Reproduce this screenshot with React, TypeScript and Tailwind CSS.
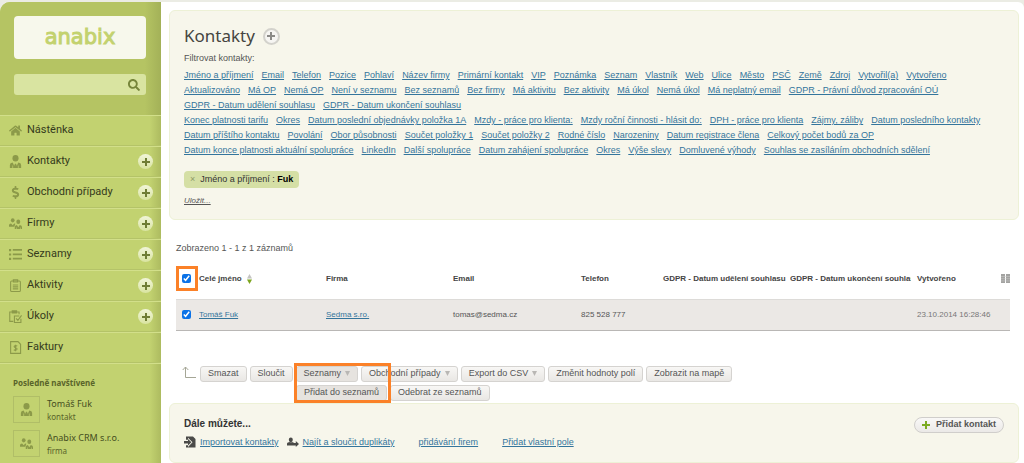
import React, { useState } from "react";
import { FaHome, FaDollarSign, FaSearch } from "react-icons/fa";

type IconProps = { className?: string };

const PersonIcon: React.FC<IconProps> = ({ className }) => (
  <svg viewBox="0 0 12 12" className={className} fill="currentColor">
    <ellipse cx="6" cy="3" rx="2.8" ry="3" />
    <path d="M.8 12V9.2Q.8 7.4 3.4 7l1.4 3 .7-2h1l.7 2 1.4-3q2.6.4 2.6 2.2V12H8.8V9.8h-.6V12H3.8V9.8h-.6V12z" />
  </svg>
);

const PeopleIcon: React.FC<IconProps> = ({ className }) => (
  <svg viewBox="0 0 14 12" className={className} fill="currentColor">
    <ellipse cx="4" cy="2.6" rx="2" ry="2.3" />
    <path d="M0 9.5V7.8Q0 6.2 2.2 5.9L4 8l1.6-2.1 1.2.4-1 3.2z" />
    <ellipse cx="10" cy="4.2" rx="2.1" ry="2.4" />
    <path d="M6.2 12V9.8Q6.2 8 8.4 7.5L10 10l1.6-2.5q2.4.5 2.4 2.3V12h-1.4v-1.6H12V12H8.2v-1.6h-.6V12z" />
  </svg>
);

const ListIcon: React.FC<IconProps> = ({ className }) => (
  <svg viewBox="0 0 12 12" className={className} fill="currentColor">
    <path d="M0 1h2v2H0zM0 5h2v2H0zM0 9h2v2H0zM3.5 1H12v1.6H3.5zM3.5 5H12v1.6H3.5zM3.5 9H12v1.6H3.5z" />
  </svg>
);

const ClipboardIcon: React.FC<IconProps> = ({ className }) => (
  <svg viewBox="0 0 12 12" className={className} fill="none" stroke="currentColor">
    <rect x="1.5" y="1.8" width="9" height="9.7" rx="1" />
    <path d="M4 .8h4v2H4zM3.5 5.5h5M3.5 7.3h5M3.5 9.1h5" />
  </svg>
);

const TaskIcon: React.FC<IconProps> = ({ className }) => (
  <svg viewBox="0 0 12 12" className={className} fill="none" stroke="currentColor">
    <path d="M4 10.5H.7V1.8h8.6V4M3 .8h4v2H3z" />
    <path d="M11 8v3.5H5V5.5h4.5M6.5 7.8l1.7 1.8L11.6 5" />
  </svg>
);

const InvoiceIcon: React.FC<IconProps> = ({ className }) => (
  <svg viewBox="0 0 12 12" className={className} fill="none" stroke="currentColor">
    <path d="M1.5.6h6.8l2.4 2.4v8.4H1.5z" />
    <path d="M7.6 4.7Q6 3.8 4.9 4.7q-.6 1 1.1 1.5 2 .5 1.2 1.7Q6 8.9 4.4 8M6 3.5v6" />
  </svg>
);

const ImportIcon: React.FC<IconProps> = ({ className }) => (
  <svg viewBox="0 0 12 12" className={className} fill="currentColor">
    <path d="M2 .5h7l2.5 2.5v8.5H2V9.2h2V11l4.5-4.8L4 1.8v2H2z" />
    <path d="M0 5h4V3l3.4 3.2L4 9.4v-2H0z" />
  </svg>
);

const MergeIcon: React.FC<IconProps> = ({ className }) => (
  <svg viewBox="0 0 12 12" className={className} fill="currentColor">
    <ellipse cx="3.8" cy="3.8" rx="2" ry="2.4" />
    <path d="M0 9.4V7.6Q0 6.4 3 6l1 .6 1-.6 2.4.9h1.4V5L12 8l-3.2 3V9.4z" />
  </svg>
);

const PlusGlyph: React.FC<IconProps> = ({ className }) => (
  <svg viewBox="0 0 8 8" className={className} fill="currentColor">
    <path d="M3 0h2v3h3v2H5v3H3V5H0V3h3z" />
  </svg>
);

const menu = [
  { label: "Nástěnka", Icon: FaHome, add: false },
  { label: "Kontakty", Icon: PersonIcon, add: true },
  { label: "Obchodní případy", Icon: FaDollarSign, add: true },
  { label: "Firmy", Icon: PeopleIcon, add: true },
  { label: "Seznamy", Icon: ListIcon, add: true },
  { label: "Aktivity", Icon: ClipboardIcon, add: true },
  { label: "Úkoly", Icon: TaskIcon, add: true },
  { label: "Faktury", Icon: InvoiceIcon, add: false },
];

const recent = [
  { name: "Tomáš Fuk", kind: "kontakt", Icon: PersonIcon },
  { name: "Anabix CRM s.r.o.", kind: "firma", Icon: PeopleIcon },
];

const filters = [
  ["Jméno a příjmení", "Email", "Telefon", "Pozice", "Pohlaví", "Název firmy", "Primární kontakt", "VIP", "Poznámka", "Seznam", "Vlastník", "Web", "Ulice", "Město", "PSČ", "Země", "Zdroj", "Vytvořil(a)", "Vytvořeno"],
  ["Aktualizováno", "Má OP", "Nemá OP", "Není v seznamu", "Bez seznamů", "Bez firmy", "Má aktivitu", "Bez aktivity", "Má úkol", "Nemá úkol", "Má neplatný email", "GDPR - Právní důvod zpracování OÚ"],
  ["GDPR - Datum udělení souhlasu", "GDPR - Datum ukončení souhlasu"],
  ["Konec platnosti tarifu", "Okres", "Datum poslední objednávky položka 1A", "Mzdy - práce pro klienta:", "Mzdy roční činnosti - hlásit do:", "DPH - práce pro klienta", "Zájmy, záliby", "Datum posledního kontakty"],
  ["Datum příštího kontaktu", "Povolání", "Obor působnosti", "Součet položky 1", "Součet položky 2", "Rodné číslo", "Narozeniny", "Datum registrace člena", "Celkový počet bodů za OP"],
  ["Datum konce platnosti aktuální spolupráce", "LinkedIn", "Další spolupráce", "Datum zahájení spolupráce", "Okres", "Výše slevy", "Domluvené výhody", "Souhlas se zasíláním obchodních sdělení"],
];

const link = "text-[#34759c] underline";

const ToolButton: React.FC<{ label: string; menu?: boolean; active?: boolean }> = ({
  label,
  menu,
  active,
}) => (
  <button
    className={`flex h-4 items-center gap-1 whitespace-nowrap rounded-[3px] border border-[#d5d3d0] px-[7px] text-[9px] text-[#555] ${
      active ? "bg-[#e6e3df]" : "bg-linear-to-b from-[#f8f7f5] to-[#e9e7e4]"
    }`}
  >
    {label}
    {menu && (
      <svg viewBox="0 0 5 5" className="size-[5px]" fill="#b9b7b4">
        <path d="M0 0h5L2.5 5z" />
      </svg>
    )}
  </button>
);

const Sidebar: React.FC = () => (
  <aside className="flex w-[161px] shrink-0 flex-col overflow-hidden rounded-tl-[10px] bg-[#c2d270] bg-linear-to-r from-[#c2d270] from-93% to-[#adbb60] font-['Noto_Sans',sans-serif]">
    <div className="flex h-[113px] flex-col gap-[15px] bg-linear-to-r from-[#b5c463] from-90% to-[#a3b158] pt-[14px] pr-[15px] pl-[14px]">
      <a
        href="#"
        className="flex h-[43px] items-center justify-center rounded bg-[#f7f8ec] font-['DejaVu_Sans',sans-serif] text-[21px] text-[#c3d26f] [-webkit-text-stroke:1px_#c3d26f]"
      >
        anabix
      </a>
      <form className="flex h-[21px] items-center rounded-[3px] bg-[#d9e4a1] pr-[6px]">
        <input
          type="text"
          aria-label="Hledat"
          className="h-full min-w-0 flex-1 px-2 text-[10px] outline-none"
        />
        <button type="button" aria-label="Hledat">
          <FaSearch className="size-3 text-[#76853a]" />
        </button>
      </form>
    </div>

    <nav>
      {menu.map(({ label, Icon, add }) => (
        <div
          key={label}
          className="flex h-[31px] items-center border-t border-t-[#d2df8a] border-b border-b-[#b4c368] pr-2 pl-[9px]"
        >
          <a
            href="#"
            className="flex flex-1 items-center gap-[5px] font-[Roboto,sans-serif] text-[11px] text-[#353a1c]"
          >
            <Icon className="size-[13px] text-[#8c9a49]" />
            {label}
          </a>
          {add && (
            <button
              aria-label={`Přidat: ${label}`}
              className="flex size-[15px] items-center justify-center rounded-full bg-linear-to-b from-[#f1f5d9] to-[#d9e4a0]"
            >
              <PlusGlyph className="size-2 text-[#6f7d35]" />
            </button>
          )}
        </div>
      ))}
    </nav>

    <div className="border-t border-[#d2df8a] px-[13px] pt-[13px] text-[#59642a]">
      <h2 className="text-[8px] leading-3 font-bold">Posledně navštívené</h2>
      {recent.map(({ name, kind, Icon }) => (
        <a href="#" key={name} className="mt-[7px] flex h-[27px] items-center gap-[7px]">
          <span className="flex size-[27px] items-center justify-center border border-[#b0be67]">
            <Icon className="size-[13px] text-[#8c9a49]" />
          </span>
          <span className="flex flex-col">
            <span className="text-[9px] leading-[14px] text-[#454e20]">{name}</span>
            <span className="text-[8px] leading-3">{kind}</span>
          </span>
        </a>
      ))}
    </div>
  </aside>
);

const FilterPanel: React.FC = () => (
  <section className="min-h-[210px] rounded-md border border-[#edf1d6] bg-[#f7f6eb] px-[14px] pt-[13px]">
    <div className="flex h-6 items-center gap-2">
      <h1 className="font-['Noto_Sans',sans-serif] text-[17px] text-[#45453f]">Kontakty</h1>
      <button
        aria-label="Přidat kontakt"
        className="flex size-[17px] items-center justify-center rounded-full border-2 border-[#d3d2cc] bg-[#f6f5f2]"
      >
        <PlusGlyph className="size-2 text-[#8b8a87]" />
      </button>
    </div>
    <p className="mt-[3px] leading-[15px]">Filtrovat kontakty:</p>
    <div className="mt-[2px]">
      {filters.map((row) => (
        <div key={row[0]} className="flex flex-wrap gap-x-2">
          {row.map((name) => (
            <a href="#" key={name} className={`${link} leading-[15px]`}>
              {name}
            </a>
          ))}
        </div>
      ))}
    </div>
    <div className="mt-[13px] flex">
      <span className="flex h-[17px] items-center rounded bg-[#d5dfa5] px-[6px] text-[#333]">
        <button aria-label="Odebrat filtr" className="mr-[5px] text-[#8e9a66]">
          ×
        </button>
        <span>
          Jméno a příjmení : <b className="text-black">Fuk</b>
        </span>
      </span>
    </div>
    <a href="#" className="mt-[6px] inline-block text-[8px] leading-[14px] italic underline">
      Uložit...
    </a>
  </section>
);

const ContactTable: React.FC = () => {
  const [checked, setChecked] = useState(true);
  const toggle = () => setChecked(!checked);

  return (
    <table className="w-full table-fixed text-left text-[8px] whitespace-nowrap">
      <colgroup>
        <col className="w-[23px]" />
        <col className="w-[127px]" />
        <col className="w-[127px]" />
        <col className="w-[128px]" />
        <col className="w-[82px]" />
        <col className="w-[127px]" />
        <col className="w-[127px]" />
        <col />
      </colgroup>
      <thead className="text-[#444]">
        <tr className="h-10">
          <th className="relative">
            <input
              type="checkbox"
              aria-label="Vybrat vše"
              checked={checked}
              onChange={toggle}
              className="ml-[6px] block size-[9px] accent-[#0b72e7]"
            />
            <span className="pointer-events-none absolute top-[7px] left-0 h-[25px] w-[22px] border-3 border-[#fb8128]" />
          </th>
          <th>
            <span className="flex items-center gap-[5px]">
              Celé jméno
              <svg viewBox="0 0 5 10" className="h-[10px] w-[5px]">
                <path d="M0 4.4L2.5 0 5 4.4z" fill="#c4c4c2" />
                <path d="M0 5.6L2.5 10 5 5.6z" fill="#7ca51e" />
              </svg>
            </span>
          </th>
          <th>Firma</th>
          <th>Email</th>
          <th>Telefon</th>
          <th>GDPR - Datum udělení souhlasu</th>
          <th className="pr-[6px]">
            <div className="overflow-hidden">GDPR - Datum ukončení souhlasu</div>
          </th>
          <th>
            <span className="flex items-center justify-between">
              Vytvořeno
              <button aria-label="Sloupce">
                <svg viewBox="0 0 9 9" className="size-[9px]">
                  <path d="M0 0h4v9H0zM5 0h4v9H5z" fill="#a3a3a1" />
                  <path d="M0 2.5h9M0 4.7h9M0 6.9h9" stroke="#cfcfcd" strokeWidth=".5" />
                </svg>
              </button>
            </span>
          </th>
        </tr>
      </thead>
      <tbody>
        <tr className="h-[31px] border-t border-b border-t-[#dddbd8] border-b-[#b9b7b5] bg-[#ebe8e5]">
          <td>
            <input
              type="checkbox"
              aria-label="Vybrat Tomáš Fuk"
              checked={checked}
              onChange={toggle}
              className="ml-[6px] block size-[9px] accent-[#0b72e7]"
            />
          </td>
          <td>
            <a href="#" className={link}>
              Tomáš Fuk
            </a>
          </td>
          <td>
            <a href="#" className={link}>
              Sedma s.ro.
            </a>
          </td>
          <td>tomas@sedma.cz</td>
          <td>825 528 777</td>
          <td />
          <td />
          <td className="text-[#777]">23.10.2014 16:28:46</td>
        </tr>
      </tbody>
    </table>
  );
};

const Toolbar: React.FC = () => (
  <div className="mt-[35px] flex gap-1 pl-[6px]">
    <svg viewBox="0 0 14 13" className="h-[13px] w-[14px]" fill="none" stroke="#a5a696">
      <path d="M.7 4L3.5 1l2.8 3M3.5 1v10.5H14" />
    </svg>
    <div className="flex flex-col gap-[3px]">
      <div className="flex gap-[3px]">
        <ToolButton label="Smazat" />
        <ToolButton label="Sloučit" />
        <div className="relative">
          <ToolButton label="Seznamy" menu active />
          <span className="pointer-events-none absolute -top-[3px] -left-[2px] z-10 h-10 w-[97px] border-3 border-[#fb8128]" />
        </div>
        <ToolButton label="Obchodní případy" menu />
        <ToolButton label="Export do CSV" menu />
        <ToolButton label="Změnit hodnoty polí" />
        <ToolButton label="Zobrazit na mapě" />
      </div>
      <div className="flex gap-[3px] pl-24">
        <ToolButton label="Přidat do seznamů" active />
        <ToolButton label="Odebrat ze seznamů" />
      </div>
    </div>
  </div>
);

const NextSteps: React.FC = () => (
  <section className="mt-[2px] flex min-h-[60px] items-start justify-between rounded-md border border-[#edf1d6] bg-[#f7f6eb] pt-[13px] pr-[14px] pl-[14px]">
    <div>
      <h2 className="text-[10px] leading-[14px] font-bold text-[#333]">Dále můžete...</h2>
      <div className="mt-1 flex items-center leading-[15px]">
        <ImportIcon className="mr-1 size-3 text-[#4a4a48]" />
        <a href="#" className={link}>
          Importovat kontakty
        </a>
        <MergeIcon className="mr-1 ml-2 size-3 text-[#4a4a48]" />
        <a href="#" className={link}>
          Najít a sloučit duplikáty
        </a>
        <a href="#" className={`ml-6 ${link}`}>
          přidávání firem
        </a>
        <a href="#" className={`ml-6 ${link}`}>
          Přidat vlastní pole
        </a>
      </div>
    </div>
    <button className="flex h-4 items-center gap-[6px] rounded-full border border-[#d0cecb] bg-linear-to-b from-[#f9f8f7] to-[#ebe9e7] px-[7px] font-bold text-[#555]">
      <PlusGlyph className="size-2 text-[#7cab23]" />
      Přidat kontakt
    </button>
  </section>
);

const App: React.FC = () => {
  return (
    <div className="flex min-h-screen bg-[#ebece4] pt-[2px] font-['Liberation_Sans',Arial,sans-serif] text-[9px] text-[#555]">
      <Sidebar />
      <main className="min-w-0 flex-1 rounded-tr-md bg-white pt-2 pr-[5px] pl-2">
        <FilterPanel />
        <div className="pr-[9px] pl-[7px]">
          <p className="mt-[21px] mb-[3px] leading-[15px]">Zobrazeno 1 - 1 z 1 záznamů</p>
          <ContactTable />
          <Toolbar />
        </div>
        <NextSteps />
      </main>
    </div>
  );
};

export default App;
